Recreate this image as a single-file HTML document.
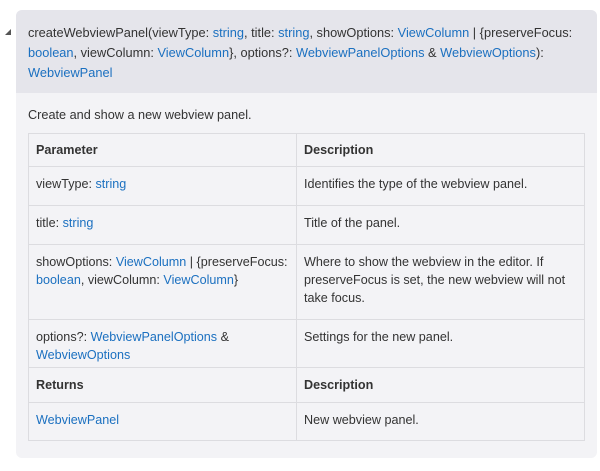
<!DOCTYPE html>
<html><head><style>
body{margin:0;background:#fff;font-family:"Liberation Sans",sans-serif;font-size:12.7px;color:#333;width:600px;height:471px;position:relative;overflow:hidden}
a{color:#1b70c0;text-decoration:none}
.tri{position:absolute;left:5px;top:29px;width:0;height:0;border-left:6px solid transparent;border-bottom:6px solid #555}
.card{position:absolute;left:16px;top:10px;width:581px;height:448px;background:#f3f3f6;border-radius:6px;overflow:hidden}
.hd{background:#e5e5eb;height:83px;padding:13px 12px 0 12px;box-sizing:border-box;line-height:20px;font-size:12.8px}
.desc{position:absolute;left:12px;top:98px}
table{position:absolute;left:12px;top:123px;width:557px;border-collapse:collapse;font-size:12.6px}
td{border:1px solid #dcdce0;vertical-align:top;padding:8px 3px 0 7px;line-height:18px;box-sizing:border-box}
td.c1{width:268px}
th{border:1px solid #dcdce0;text-align:left;padding:0 7px;font-weight:bold;height:32px}
</style></head><body>
<div class="tri"></div>
<div class="card">
<div class="hd">createWebviewPanel(viewType: <a>string</a>, title: <a>string</a>, showOptions: <a>ViewColumn</a> | {preserveFocus: <a>boolean</a>, viewColumn: <a>ViewColumn</a>}, options?: <a>WebviewPanelOptions</a> &amp; <a>WebviewOptions</a>): <a>WebviewPanel</a></div>
<div class="desc">Create and show a new webview panel.</div>
<table>
<tr><th>Parameter</th><th>Description</th></tr>
<tr style="height:39px"><td class="c1">viewType: <a>string</a></td><td>Identifies the type of the webview panel.</td></tr>
<tr style="height:39px"><td class="c1">title: <a>string</a></td><td>Title of the panel.</td></tr>
<tr style="height:75px"><td class="c1">showOptions: <a>ViewColumn</a> | {preserveFocus:<br><a>boolean</a>, viewColumn: <a>ViewColumn</a>}</td><td>Where to show the webview in the editor. If preserveFocus is set, the new webview will not take focus.</td></tr>
<tr style="height:48px"><td class="c1">options?: <a>WebviewPanelOptions</a> &amp;<br><a>WebviewOptions</a></td><td>Settings for the new panel.</td></tr>
<tr><th style="height:34px">Returns</th><th>Description</th></tr>
<tr style="height:38px"><td class="c1"><a>WebviewPanel</a></td><td>New webview panel.</td></tr>
</table>
</div>
</body></html>
